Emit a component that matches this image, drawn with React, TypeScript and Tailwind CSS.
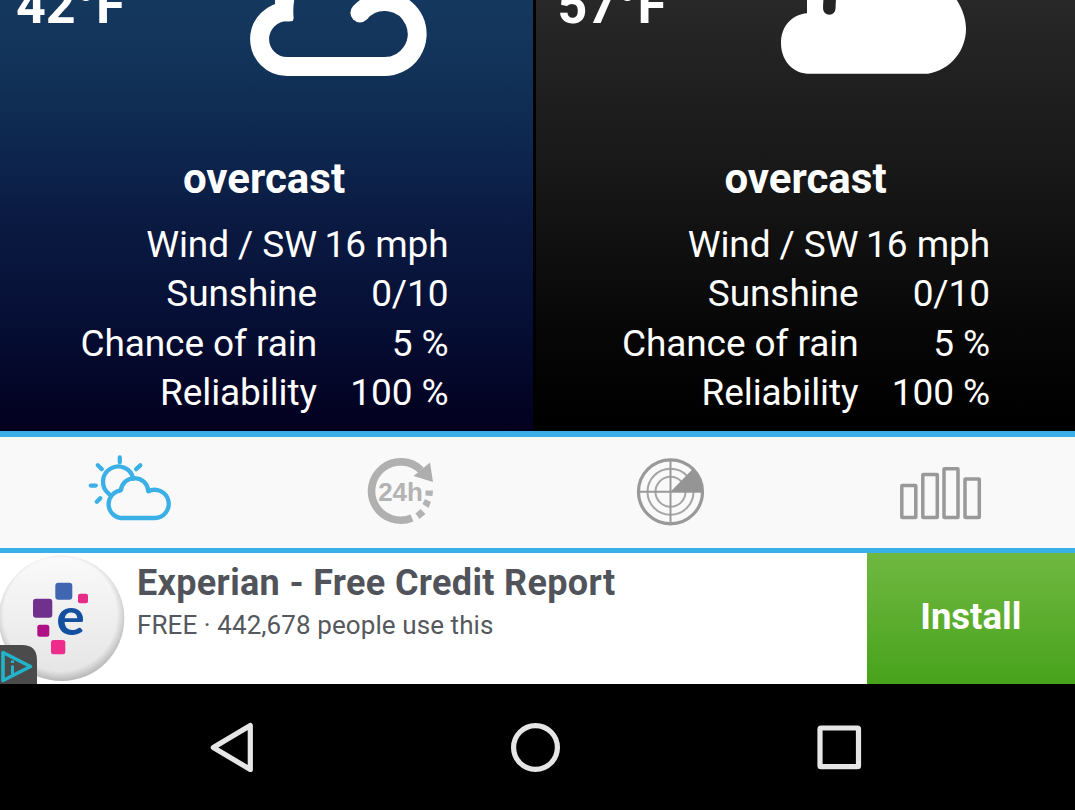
import type { ReactNode } from "react";

type Row = [label: string, value: string];

const rows: Row[] = [
  ["Wind / SW", "16 mph"],
  ["Sunshine", "0/10"],
  ["Chance of rain", "5 %"],
  ["Reliability", "100 %"],
];

function Forecast({ degrees, icon, className }: { degrees: string; icon: ReactNode; className: string }) {
  return (
    <section className={`h-[431px] overflow-hidden text-white ${className}`}>
      <div className="flex h-[100px] items-start">
        <div className="-mt-[24px] w-[230px] shrink-0 whitespace-nowrap pl-4 text-[52px] leading-[60px] font-bold">
          {degrees}
          <span className="relative top-[2px]">°</span>F
        </div>
        {icon}
      </div>
      <h2 className="mt-[54.5px] w-[528px] text-center text-[42px] leading-[48px] font-bold">overcast</h2>
      <dl className="mt-[17.2px] text-[37px] leading-[49.5px]">
        {rows.map(([label, value]) => (
          <div key={label} className="flex whitespace-nowrap">
            <dt className="w-[317px] text-right tracking-[-0.08px]">{label}</dt>
            <dd className="w-[131.5px] text-right tracking-[-0.08px]">{value}</dd>
          </div>
        ))}
      </dl>
    </section>
  );
}

function NightCloud() {
  return (
    <svg className="h-[90px] w-[210px] shrink-0" viewBox="230 0 210 90" fill="none">
      <path d="M275 -2V4.200L268 9L286 21.200H291.500Q294 21 293.500 16Q292.800 8 294.500 -2Z" fill="#fff" />
      <path
        d="M290 11.700H287A27.400 27.400 0 0 0 287 66.500H384A32.500 32.500 0 1 0 360 12.800"
        stroke="#fff"
        strokeWidth="19"
        strokeLinejoin="round"
      />
      <circle cx="360" cy="12.800" r="9.600" fill="#fff" />
    </svg>
  );
}

function DayCloud() {
  return (
    <svg className="h-[90px] w-[210px] shrink-0" viewBox="231 0 210 90" fill="none">
      <path
        d="M266 -2V13.200C251 14.500 240 26 240 43C240 60 251 72.500 266 73.700H387C410 70 425 50 425 29C425 18 421 8 414.500 -2Z"
        fill="#fff"
      />
      <path d="M289.300 -6Q288.300 2 288.300 8.500" stroke="#252525" strokeWidth="12.500" strokeLinecap="round" />
    </svg>
  );
}

function SunCloudIcon() {
  return (
    <svg className="h-[80px] w-[90px]" viewBox="85.7 452.7 90 80" fill="none" stroke="#3bb0e6" strokeWidth="4.3" strokeLinecap="round">
      <path d="M121.500 490A14 14 0 0 0 121 517.700H155A14.100 14.100 0 1 0 149 491A13.800 13.800 0 0 0 121.500 490Z" strokeLinejoin="round" />
      <path d="M134 478.500A15.300 15.300 0 1 0 109.500 493.500" />
      <path d="M120.500 457V462M98.500 465L102.500 468.800M141 465L136.800 468.800M91.500 485.300H96.500M97.500 501.500L101 498" />
    </svg>
  );
}

function DayHoursIcon() {
  return (
    <svg className="h-[80px] w-[80px]" viewBox="360 453 80 80" fill="none">
      <path d="M412 518A29.200 29.200 0 1 1 421 470" stroke="#b0b0b0" strokeWidth="7.600" />
      <path d="M430 462.500L433 482L413.500 476Z" fill="#aeaeae" />
      <path d="M415.500 513.500L420.500 509L425.500 514L419.500 519ZM422.500 504L425 499L431 502L428.500 508ZM425.500 490.500H433L432.500 496L425.500 495.500Z" fill="#b3b3b3" />
      <text x="378.300" y="501" fill="#b3b3b3" className="font-['Liberation_Sans',sans-serif] text-[26px] font-bold" textLength="44.500">24h</text>
    </svg>
  );
}

function RadarIcon() {
  return (
    <svg className="h-[80px] w-[80px]" viewBox="630 452.7 80 80" fill="none" stroke="#999">
      <circle cx="670.500" cy="491.500" r="32" strokeWidth="3.200" />
      <circle cx="670.500" cy="491.500" r="23" strokeWidth="2" stroke="#a5a5a5" />
      <circle cx="670.500" cy="491.500" r="15" strokeWidth="2" stroke="#a5a5a5" />
      <path d="M638.500 491.500H702.500M670.500 459.500V523.500" strokeWidth="2" />
      <path d="M670.500 491.500L693 468.500Q702.500 478 702.500 491.500Z" fill="#959595" stroke="none" />
    </svg>
  );
}

function BarsIcon() {
  return (
    <svg className="h-[60px] w-[90px]" viewBox="895 463 90 60" fill="none" stroke="#999" strokeWidth="3.500">
      <rect x="901.800" y="485.500" width="14" height="32" rx="0.500" />
      <rect x="922.800" y="474.500" width="14.500" height="43" rx="0.500" />
      <rect x="944" y="468.700" width="14" height="48.800" rx="0.500" />
      <rect x="965" y="479" width="14.300" height="38.500" rx="0.500" />
    </svg>
  );
}

function AdLogo() {
  return (
    <svg className="h-[131px] w-[137px] shrink-0" viewBox="0 553 137 131">
      <defs>
        <radialGradient id="rim" cx="0.490" cy="0.470" r="0.530">
          <stop offset="0.850" stopColor="#000" stopOpacity="0" />
          <stop offset="1" stopColor="#000" stopOpacity="0.200" />
        </radialGradient>
        <linearGradient id="disc" x1="0" y1="0" x2="0" y2="1">
          <stop offset="0" stopColor="#fafafa" />
          <stop offset="1" stopColor="#e4e4e4" />
        </linearGradient>
      </defs>
      <circle cx="61.500" cy="618.300" r="62.800" fill="url(#disc)" />
      <circle cx="61.500" cy="618.300" r="62.800" fill="url(#rim)" />
      <rect x="55.300" y="582.700" width="17" height="17" rx="3" fill="#4066b2" />
      <rect x="33" y="598.700" width="19.300" height="19" rx="3" fill="#70308e" />
      <rect x="78" y="593.700" width="10" height="9.500" rx="2" fill="#e52d88" />
      <rect x="37.300" y="624.700" width="12" height="12" rx="2.500" fill="#b00f86" />
      <rect x="51" y="640" width="14.300" height="14.300" rx="2.500" fill="#ee2c8c" />
      <text x="56.300" y="634.800" fill="#1550a0" className="font-['Lato',sans-serif] text-[51px] font-bold" textLength="28.500" lengthAdjust="spacingAndGlyphs">e</text>
      <path d="M0 645H22Q37 645 37 660V684H0Z" fill="#4b4b4b" />
      <path d="M3 652.500L30.500 666.500L3 680.500Z" fill="none" stroke="#20b5cb" strokeWidth="3.600" strokeLinejoin="round" />
      <path d="M12.500 660.500V663M12.500 665.500V674" stroke="#20b5cb" strokeWidth="3" />
    </svg>
  );
}

export default function App() {
  return (
    <main className="flex h-[810px] w-[1075px] flex-col overflow-hidden bg-black font-['Roboto',sans-serif]">
      <div className="flex h-[431px]">
        <Forecast
          degrees="42"
          icon={<NightCloud />}
          className="w-[533px] bg-[linear-gradient(#15385f_0px,#123258_70px,#0e2950_130px,#0c2149_180px,#0b1a42_220px,#060f35_320px,#03001f_431px)]"
        />
        <Forecast
          degrees="57"
          icon={<DayCloud />}
          className="ml-[3px] w-[539px] bg-[linear-gradient(#282828_0px,#202020_80px,#171717_180px,#0e0e0e_260px,#040404_360px,#000_431px)] pl-[5.5px]"
        />
      </div>
      <nav className="flex h-[122px] items-center border-t-[6px] border-b-[5px] border-[#3bb0e6] bg-[#f9f9f9]">
        <div className="flex w-[260px] shrink-0 justify-center"><SunCloudIcon /></div>
        <div className="flex w-[280px] shrink-0 justify-center"><DayHoursIcon /></div>
        <div className="flex w-[260px] shrink-0 justify-center"><RadarIcon /></div>
        <div className="flex w-[275px] shrink-0 justify-center pl-[5px]"><BarsIcon /></div>
      </nav>
      <aside className="flex h-[131px] bg-white">
        <AdLogo />
        <div className="flex-1 whitespace-nowrap">
          <div className="mt-[9px] text-[36px] leading-[42px] font-bold tracking-[0.34px] text-[#50545a]">Experian - Free Credit Report</div>
          <div className="mt-[6px] text-[26px] leading-[30px] tracking-[0.09px] text-[#55585c]">FREE · 442,678 people use this</div>
        </div>
        <button className="w-[208.500px] shrink-0 bg-linear-to-b from-[#70b840] to-[#47a31a] pb-[2px] text-[36.500px] font-bold text-white">Install</button>
      </aside>
      <footer className="h-[126px] bg-black">
        <svg className="h-[126px] w-[1075px]" viewBox="0 684 1075 126" fill="none" stroke="#e6e6e6" strokeWidth="5.200">
          <path d="M213.300 747.500L250.300 725.500V769.500Z" strokeLinejoin="round" />
          <circle cx="535.500" cy="747.500" r="21.900" />
          <rect x="820" y="728" width="38.500" height="38.700" rx="1" strokeLinejoin="round" />
        </svg>
      </footer>
    </main>
  );
}
